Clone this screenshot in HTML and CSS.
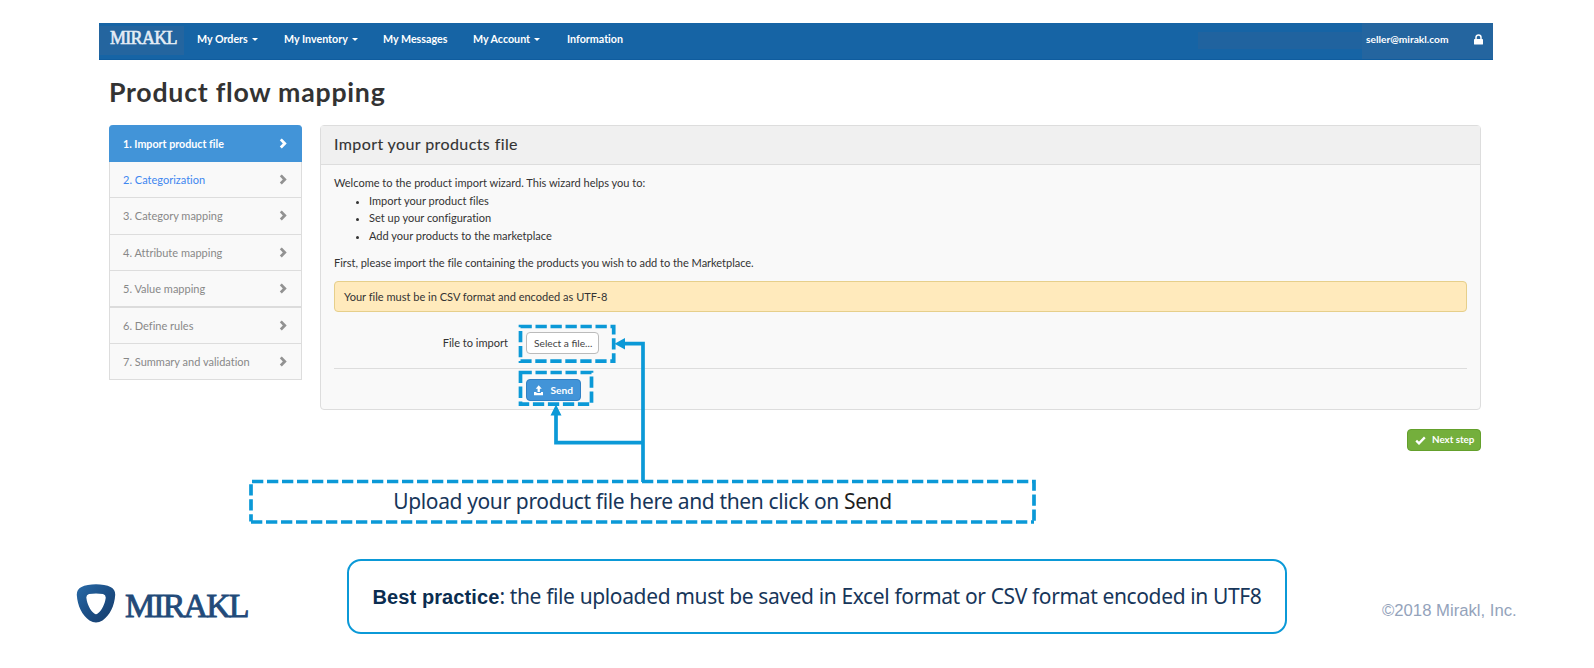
FILE: index.html
```html
<!DOCTYPE html>
<html lang="en">
<head>
<meta charset="utf-8">
<title>Product flow mapping</title>
<link rel="stylesheet" href="styles.css">
</head>
<body>
<svg class="defs" width="0" height="0">
  <symbol id="chevron" viewBox="0 0 8 11"><path d="M0.8 2.3 2.8 .4 7.7 5.4 2.8 10.4 .8 8.5 3.8 5.4Z"/></symbol>
</svg>
<div class="page">
  <header class="nav">
    <a class="brand">MIRAKL</a>
    <nav class="links">
      <a class="link orders">My Orders<i class="caret"></i></a>
      <a class="link inventory">My Inventory<i class="caret"></i></a>
      <a class="link messages">My Messages</a>
      <a class="link account">My Account<i class="caret"></i></a>
      <a class="link">Information</a>
    </nav>
    <div class="shop"></div>
    <div class="user">
      <span class="email">seller@mirakl.com</span>
      <svg class="lock" viewBox="0 0 9 11"><path d="M2 5V3.4a2.5 2.5 0 0 1 5 0V5" fill="none" stroke="#fff" stroke-width="1.5"/><rect x="0" y="5" width="9" height="5.6" rx=".7" fill="#fff"/></svg>
    </div>
  </header>

  <h1 class="title">Product flow mapping</h1>

  <main class="content">
    <ul class="steps">
      <li class="step active">1. Import product file<svg class="chev"><use href="#chevron"/></svg></li>
      <li class="step next">2. Categorization<svg class="chev"><use href="#chevron"/></svg></li>
      <li class="step">3. Category mapping<svg class="chev"><use href="#chevron"/></svg></li>
      <li class="step">4. Attribute mapping<svg class="chev"><use href="#chevron"/></svg></li>
      <li class="step thick">5. Value mapping<svg class="chev"><use href="#chevron"/></svg></li>
      <li class="step">6. Define rules<svg class="chev"><use href="#chevron"/></svg></li>
      <li class="step">7. Summary and validation<svg class="chev"><use href="#chevron"/></svg></li>
    </ul>
    <div class="main">
      <section class="panel">
        <h2 class="panel-title">Import your products file</h2>
        <div class="panel-body">
          <p class="intro">Welcome to the product import wizard. This wizard helps you to:</p>
          <ul class="goals">
            <li>Import your product files</li>
            <li>Set up your configuration</li>
            <li>Add your products to the marketplace</li>
          </ul>
          <p class="first">First, please import the file containing the products you wish to add to the Marketplace.</p>
          <div class="alert">Your file must be in CSV format and encoded as UTF-8</div>
          <div class="field">
            <label class="label">File to import</label>
            <button class="btn select">Select a file...</button>
          </div>
          <div class="actions">
            <button class="btn send"><svg class="upload" viewBox="0 0 10 11"><path d="M5 0 8.2 3.7H6.2V7.2H3.8V3.7H1.8ZM0 7H2.6V8.2H7.4V7H10V10.4H0Z" fill="#fff"/></svg>Send</button>
          </div>
        </div>
      </section>
      <button class="btn next-step"><svg class="check" viewBox="0 0 11 9"><path d="M1.2 4.6 4 7.4 9.8 1.4" fill="none" stroke="#fff" stroke-width="2.3"/></svg>Next step</button>
    </div>
  </main>

  <div class="callout"><span class="callout-text">Upload your product file here and then click on <span class="dark">Send</span></span></div>

  <footer class="footer">
    <div class="logo">
      <svg class="shield" viewBox="0 0 40 39">
        <defs><linearGradient id="g" x1="0" y1="0" x2="1" y2="1"><stop offset="0" stop-color="#286aa8"/><stop offset=".5" stop-color="#1c4f86"/><stop offset="1" stop-color="#183d6b"/></linearGradient></defs>
        <path fill="url(#g)" fill-rule="evenodd" d="M5 3.2C13 -.6 27 -.6 35 3.2Q39.4 5.4 39.2 11C38.5 22 34 31 26.5 36.5Q20 40.500 13.500 36.500C6 31 1.500 22 .8 11Q.6 5.400 5 3.200ZM13 10Q10 10.800 10.400 14C11.300 20.500 14 26 18 29.300Q20 31 22 29.300C26 26 28.700 20.500 29.700 14Q30 10.800 27 10Q20 8.800 13 10Z"/>
      </svg>
      <span class="wordmark">MIRAKL</span>
    </div>
    <div class="tip"><p class="tip-text"><b>Best practice</b><span class="tip-rest">: the file uploaded must be saved in Excel format or CSV format encoded in UTF8</span></p></div>
    <div class="copyright">©2018 Mirakl, Inc.</div>
  </footer>

  <svg class="annotations" viewBox="0 0 1594 668">
    <g class="dash">
      <rect x="520.5" y="326.500" width="93.200" height="34.700"/>
      <rect x="520.5" y="372.500" width="71" height="31.700"/>
      <path d="M251 521.500V481.500H1034V521.500" stroke-dashoffset="4"/>
      <path d="M251 522H1034"/>
    </g>
    <g class="line">
      <path d="M643 482V343.700H624"/>
      <path d="M643 442.700H556V414"/>
    </g>
    <path class="head" d="M614.500 343.700 625 338V349.500ZM556 404.500 550.500 415.500H561.500Z"/>
  </svg>
</div>
</body>
</html>
```

FILE: styles.css
```css
* { box-sizing: border-box; }
body { margin: 0; background: #fff; font-family: Lato, "Open Sans", sans-serif; font-variant-ligatures: none; color: #333; }
.defs { display: block; }
.page { position: relative; width: 1594px; height: 668px; overflow: hidden; padding-top: 23px; }
h1, h2, p, ul { margin: 0; padding: 0; font-weight: 400; }
ul { list-style: none; }

.nav { display: flex; align-items: stretch; width: 1394px; height: 37px; margin-left: 99px; background: #1664a5; border-bottom: 1px solid #0f5c9e; color: #fff; }
.brand { flex: none; width: 85px; height: 29px; margin-top: 3px; padding-left: 11px; background: #24659f; font: 18px/25px "Liberation Serif", serif; -webkit-text-stroke: .6px; letter-spacing: -.7px; color: #e4edf6; }
.links { display: flex; align-items: center; flex: 1; padding-left: 13px; font-size: 10.7px; font-weight: 700; line-height: 14px; padding-bottom: 5px; }
.link { display: flex; align-items: center; white-space: nowrap; }
.orders { width: 87px; }
.inventory { width: 99px; }
.messages { width: 90px; }
.account { width: 94px; }
.caret { margin: 2px 0 0 4px; border: 3px solid transparent; border-top-color: #fff; border-bottom: 0; }
.shop { width: 164px; height: 17px; margin-top: 9px; background: #20639f; }
.user { display: flex; align-items: center; width: 131px; padding: 0 10px 4px 4px; background: #24659f; justify-content: space-between; }
.email { font-size: 10.2px; font-weight: 700; }
.lock { width: 9px; height: 11px; }

.title { margin: 14px 0 0 109px; height: 50px; font-size: 26.7px; line-height: 37px; font-weight: 700; letter-spacing: .75px; }

.content { display: flex; gap: 18px; padding-left: 109px; }
.steps { width: 193px; padding-top: 1px; }
.step { display: flex; align-items: center; justify-content: space-between; height: 36.3px; padding: 0 14px 0 13px; background: #f9f9f9; border: 1px solid #ddd; border-top: 0; font-size: 11px; color: #888; }
.step.active { height: 37px; background: #4294d8; border-color: #4294d8; border-radius: 4px 4px 0 0; color: #fff; font-weight: 700; font-size: 10.7px; }
.step.next { color: #4087f0; }
.step.thick { border-bottom: 2px solid #dcdcdc; height: 37px; }
.chev { width: 8px; height: 11px; fill: #929292; }
.active .chev { fill: #fff; }

.main { display: flex; flex-direction: column; align-items: flex-end; width: 1161px; padding-top: 1px; }
.panel { width: 1161px; height: 285px; border: 1px solid #ddd; border-radius: 4px; background: #f9f9f9; }
.panel-title { height: 39px; padding-left: 13px; background: #f0f0f0; border-bottom: 1px solid #ddd; font-size: 16px; line-height: 35px; letter-spacing: .4px; -webkit-text-stroke: .1px; }
.panel-body { padding: 9px 13px 0; font-size: 11.04px; line-height: 17.7px; }
.goals { list-style: disc; padding-left: 35px; }
.goals li::marker { font-size: 10px; }
.first { margin-top: 9px; letter-spacing: -.03px; }
.alert { height: 31px; margin-top: 9.5px; padding-left: 9px; border: 1px solid #e6cf8b; border-radius: 4px; background: #ffeabc; line-height: 29px; }
.field { display: flex; align-items: center; height: 57px; border-bottom: 1px solid #ddd; padding-bottom: 7px; padding-top: 13px; }
.label { width: 174px; text-align: right; margin-right: 18px; }
.btn { display: flex; align-items: center; height: 22px; padding: 0 7px; border: 1px solid; border-radius: 4px; font: 10.2px/1 Lato, sans-serif; white-space: nowrap; }
.select { width: 73px; background: #fff; border-color: #bbb; color: #444; }
.actions { padding: 10px 0 0 192px; }
.send { width: 55px; background: #4294d8; border-color: #3080c4; color: #fff; font-weight: 700; gap: 7px; }
.upload { width: 10px; height: 11px; }
.next-step { width: 74px; margin-top: 19px; background: #74af3c; border-color: #64a02c; color: #fff; font-weight: 700; font-size: 9.8px; gap: 6px; }
.check { width: 11px; height: 9px; flex: none; }

.callout { width: 787px; height: 44px; margin: 29px 0 0 249px; text-align: center; font: 21px/43px "Noto Sans", sans-serif; letter-spacing: -.37px; color: #17365a; }
.dark { color: #1e1e1e; }

.footer { display: flex; margin-top: 35px; padding-left: 76px; }
.logo { display: flex; width: 271px; padding-top: 25px; }
.shield { width: 40px; height: 39px; }
.wordmark { margin-left: 9px; font: 34px/44px "Liberation Serif", serif; -webkit-text-stroke: .9px; letter-spacing: -1.9px; color: #224a79; }
.tip { width: 940px; height: 75px; border: 2.500px solid #0b99d7; border-radius: 14px; text-align: center; white-space: nowrap; font: 21px/71px "Noto Sans", sans-serif; letter-spacing: -.37px; color: #17365a; }
.tip b { font: bold 20px/1 "Liberation Sans", sans-serif; letter-spacing: .1px; color: #0b2d50; }
.copyright { margin: 42px 0 0 95px; font: 16.7px/20px "Liberation Sans", sans-serif; color: #94a3bb; white-space: nowrap; }

.annotations { position: absolute; left: 0; top: 0; width: 1594px; height: 668px; }
.dash { fill: none; stroke: #0b99d7; stroke-width: 3.700; stroke-dasharray: 11.300 3.700; }
.line { fill: none; stroke: #0b99d7; stroke-width: 3.700; }
.head { fill: #0b99d7; }
```
